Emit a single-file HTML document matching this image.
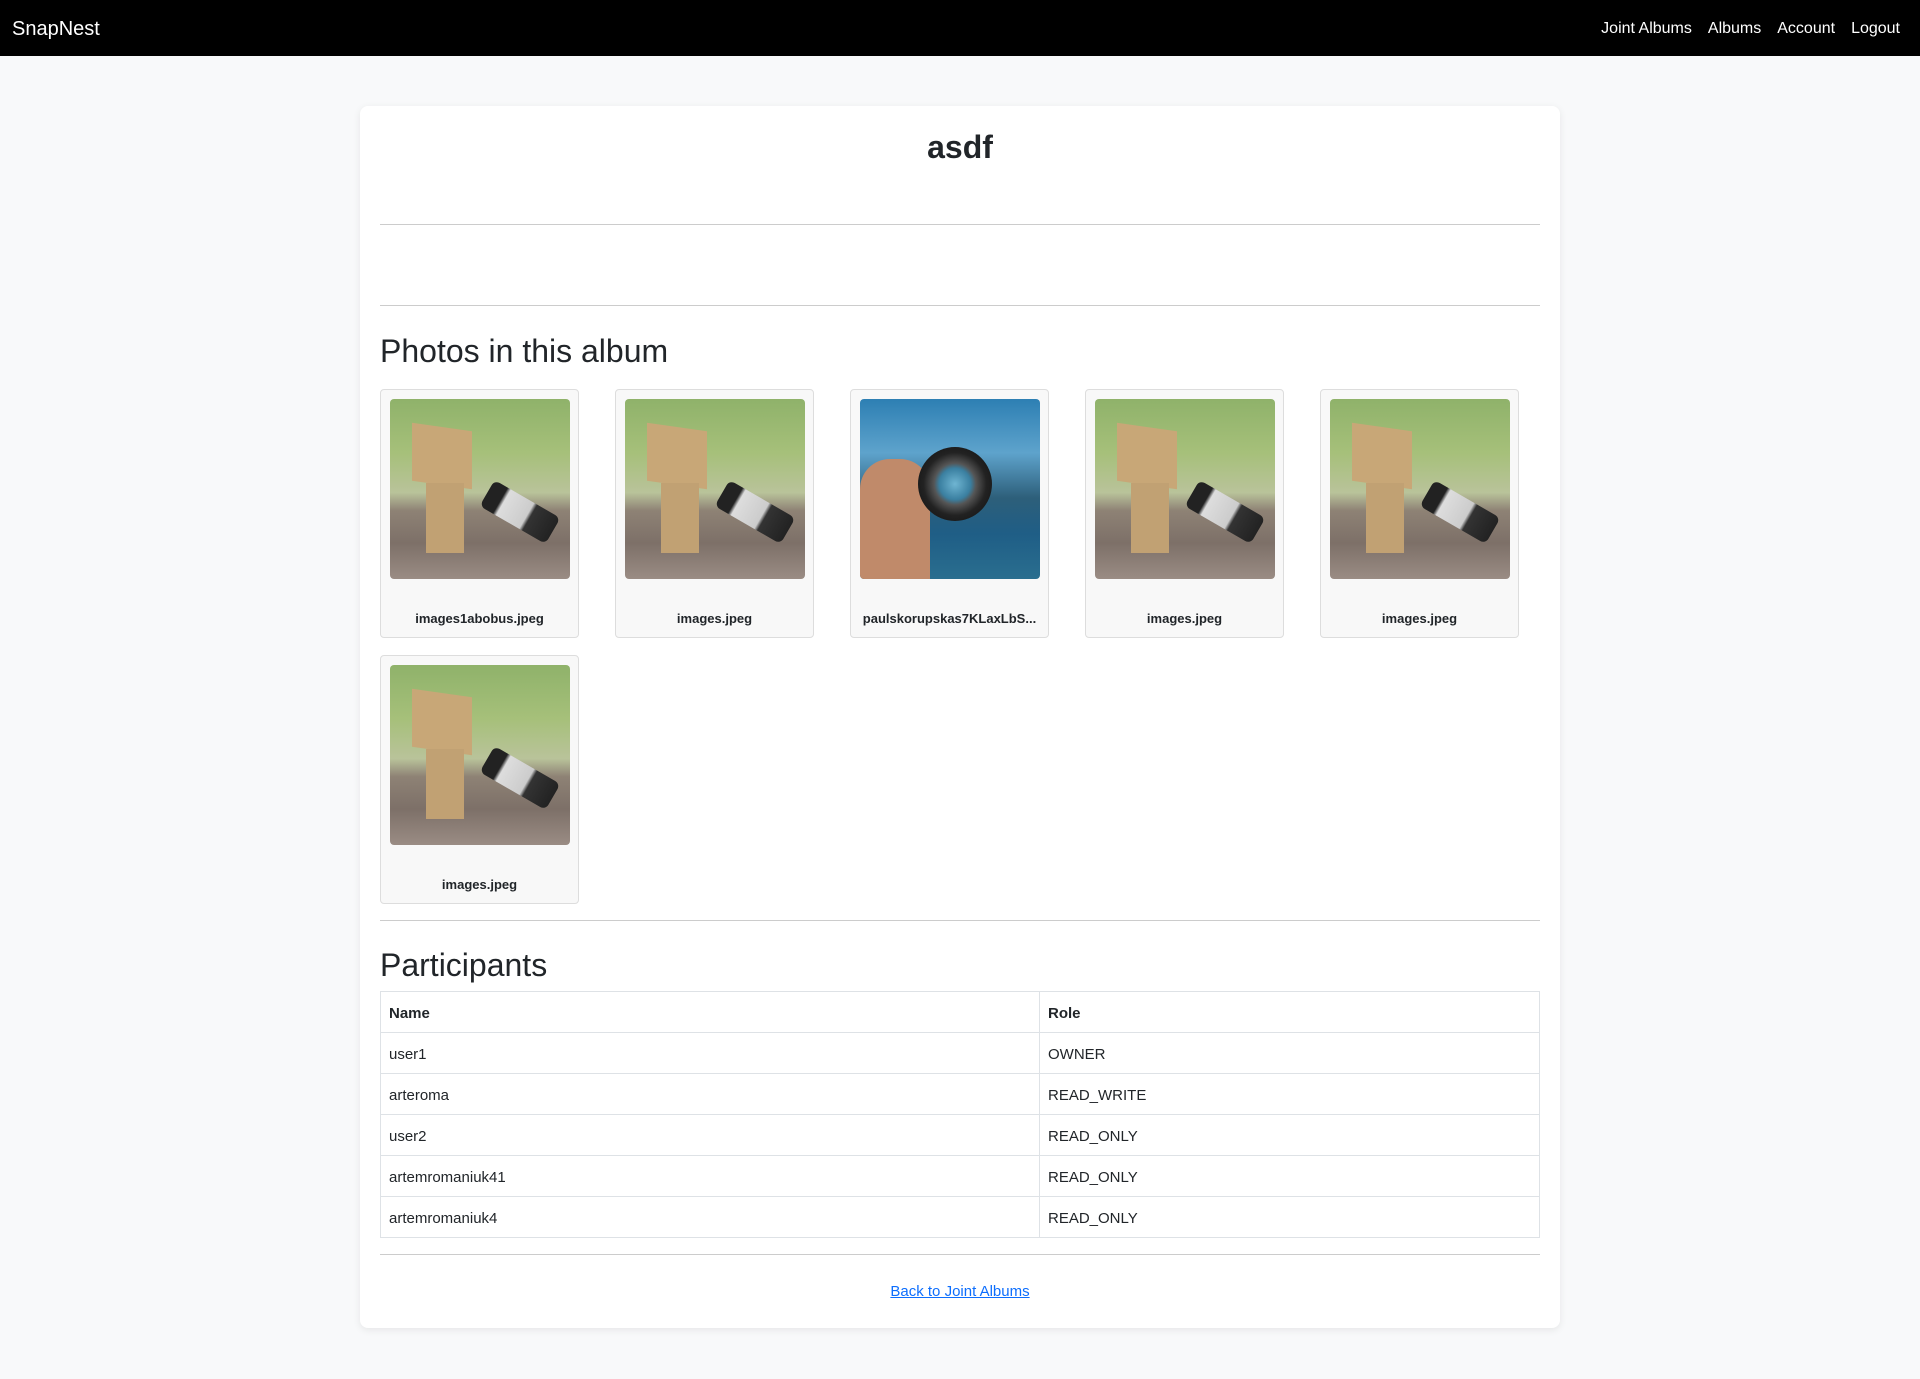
<!DOCTYPE html>
<html><head><meta charset="utf-8"><style>
*{box-sizing:border-box;margin:0;padding:0}
body{width:1920px;height:1379px;background:#f8f9fa;font-family:"Liberation Sans",sans-serif;color:#212529;overflow:hidden}
.nav{height:56px;background:#000;position:relative;color:#fff}
.brand{position:absolute;left:12px;top:18px;font-size:20px}
.links{position:absolute;right:20px;top:20px;font-size:16px}
.links span{margin-left:16px}
.card{position:absolute;left:360px;top:106px;width:1200px;height:1222px;background:#fff;border-radius:8px;box-shadow:0 2px 8px rgba(0,0,0,.08)}
hr{position:absolute;left:20px;width:1160px;border:0;border-top:1px solid #ccc}
h1{position:absolute;top:23px;width:100%;text-align:center;font-size:32px;font-weight:bold}
h2{position:absolute;left:20px;font-size:32px;font-weight:normal}
.ph{position:absolute;width:199px;height:249px;border:1px solid #ddd;border-radius:4px;background:#f8f8f8}
.img{position:absolute;left:9px;top:9px;width:180px;height:180px;border-radius:4px;overflow:hidden}
.danbo{background:linear-gradient(180deg,#8fb26a 0%,#a6c07a 30%,#b9c39a 52%,#8e8275 62%,#7d7068 80%,#9a8c84 100%)}
.danbo .head{position:absolute;left:22px;top:28px;width:60px;height:58px;background:#c8a777;transform:skewY(8deg)}
.danbo .body{position:absolute;left:36px;top:84px;width:38px;height:70px;background:#c1a173}
.danbo .lens{position:absolute;left:92px;top:98px;width:76px;height:30px;background:linear-gradient(90deg,#222 0,#222 20%,#ddd 25%,#ccc 60%,#333 65%,#222 100%);transform:rotate(30deg);border-radius:6px}
.lensimg{background:linear-gradient(180deg,#2d7fb3 0%,#5ea3cc 30%,#2d5f7a 55%,#1f5e86 75%,#2a6e8f 100%)}
.lensimg .hand{position:absolute;left:0;top:60px;width:70px;height:130px;background:#c08a6a;border-radius:30px 30px 0 0}
.lensimg .ring{position:absolute;left:58px;top:48px;width:74px;height:74px;border-radius:50%;background:radial-gradient(circle,#6fb5d2 0,#3a7fa0 30%,#555 40%,#222 60%,#0c0c0c 100%)}
.fn{position:absolute;top:221px;width:100%;text-align:center;font-size:13px;font-weight:bold;white-space:nowrap}
table{position:absolute;left:20px;top:885px;width:1160px;border-collapse:collapse;font-size:15px}
td,th{border:1px solid #dee2e6;height:41px;padding:2px 8px 0;text-align:left}
th{font-weight:bold}
a{position:absolute;top:1177px;width:100%;text-align:center;color:#0d6efd;font-size:15px;text-decoration:underline}
</style></head><body>
<div class="nav"><div class="brand">SnapNest</div><div class="links"><span>Joint Albums</span><span>Albums</span><span>Account</span><span>Logout</span></div></div>
<div class="card">
<h1>asdf</h1>
<hr style="top:118px"><hr style="top:199px">
<h2 style="top:227px">Photos in this album</h2>
<div class="ph" style="left:20px;top:283px"><div class="img danbo"><div class="head"></div><div class="body"></div><div class="lens"></div></div><div class="fn">images1abobus.jpeg</div></div>
<div class="ph" style="left:255px;top:283px"><div class="img danbo"><div class="head"></div><div class="body"></div><div class="lens"></div></div><div class="fn">images.jpeg</div></div>
<div class="ph" style="left:490px;top:283px"><div class="img lensimg"><div class="hand"></div><div class="ring"></div></div><div class="fn">paulskorupskas7KLaxLbS...</div></div>
<div class="ph" style="left:725px;top:283px"><div class="img danbo"><div class="head"></div><div class="body"></div><div class="lens"></div></div><div class="fn">images.jpeg</div></div>
<div class="ph" style="left:960px;top:283px"><div class="img danbo"><div class="head"></div><div class="body"></div><div class="lens"></div></div><div class="fn">images.jpeg</div></div>
<div class="ph" style="left:20px;top:549px"><div class="img danbo"><div class="head"></div><div class="body"></div><div class="lens"></div></div><div class="fn">images.jpeg</div></div>
<hr style="top:814px">
<h2 style="top:841px">Participants</h2>
<table>
<tr><th style="width:659px">Name</th><th>Role</th></tr>
<tr><td>user1</td><td>OWNER</td></tr>
<tr><td>arteroma</td><td>READ_WRITE</td></tr>
<tr><td>user2</td><td>READ_ONLY</td></tr>
<tr><td>artemromaniuk41</td><td>READ_ONLY</td></tr>
<tr><td>artemromaniuk4</td><td>READ_ONLY</td></tr>
</table>
<hr style="top:1148px">
<a>Back to Joint Albums</a>
</div>
</body></html>
